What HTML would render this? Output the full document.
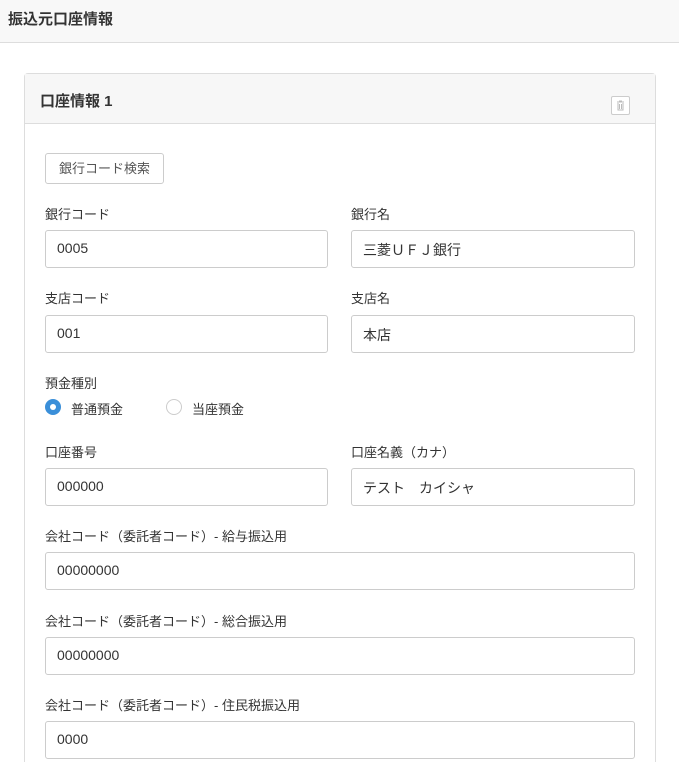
<!DOCTYPE html>
<html style="height:762px;overflow:hidden"><head><meta charset="utf-8"><style>
*{box-sizing:border-box;margin:0;padding:0}
body{width:679px;height:762px;overflow:hidden;background:#fff;font-family:"Liberation Sans","Noto Sans CJK JP",sans-serif;color:#333;position:relative}
.top{position:absolute;left:0;top:0;width:679px;height:43px;background:#f8f8f8;border-bottom:1px solid #ddd}
.top h1{position:absolute;left:8px;top:8px;font-size:15px;font-weight:bold;color:#333}
.card{position:absolute;left:24px;top:73px;width:632px;height:689px;border:1px solid #ddd;border-bottom:none;border-radius:4px 4px 0 0}
.ch{height:50px;background:#f7f7f7;border-bottom:1px solid #ddd;position:relative}
.ch h2{position:absolute;left:15px;top:16px;font-size:15px;font-weight:bold}
.trash{position:absolute;left:586px;top:22px;width:19px;height:19px;border:1px solid #ccc;border-radius:2px;background:#fff}
.a{position:absolute}
.lbl{font-size:13px;color:#333}
.in{height:38px;border:1px solid #ccc;border-radius:3px;font-size:14px;padding:9px 11px;color:#333}
.btn{left:45px;top:153px;width:119px;height:31px;border:1px solid #ccc;border-radius:3px;font-size:13px;color:#555;text-align:center;line-height:29px}
</style></head><body>
<div class="top"><h1>振込元口座情報</h1></div>
<div class="card"><div class="ch"><h2>口座情報 1</h2>
<div class="trash"><svg width="17" height="17" viewBox="0 0 17 17"><path d="M5 5h7M7 4h3M6 6v7h5V6M7.5 7v5M9.5 7v5" stroke="#bbb" fill="none" stroke-width="1"/></svg></div></div></div>
<div class="a btn">銀行コード検索</div>
<div class="a lbl" style="left:45px;top:204px">銀行コード</div>
<div class="a lbl" style="left:351px;top:204px">銀行名</div>
<div class="a in" style="left:45px;top:230px;width:283px">0005</div>
<div class="a in" style="left:351px;top:230px;width:284px">三菱ＵＦＪ銀行</div>
<div class="a lbl" style="left:45px;top:288px">支店コード</div>
<div class="a lbl" style="left:351px;top:288px">支店名</div>
<div class="a in" style="left:45px;top:315px;width:283px">001</div>
<div class="a in" style="left:351px;top:315px;width:284px">本店</div>
<div class="a lbl" style="left:45px;top:373px">預金種別</div>
<div class="a" style="left:45px;top:399px;width:16px;height:16px;border-radius:50%;background:#3a8fd9"><div style="position:absolute;left:5px;top:5px;width:6px;height:6px;border-radius:50%;background:#fff"></div></div>
<div class="a lbl" style="left:71px;top:399px">普通預金</div>
<div class="a" style="left:166px;top:399px;width:16px;height:16px;border-radius:50%;border:1px solid #ccc"></div>
<div class="a lbl" style="left:192px;top:399px">当座預金</div>
<div class="a lbl" style="left:45px;top:442px">口座番号</div>
<div class="a lbl" style="left:351px;top:442px">口座名義（カナ）</div>
<div class="a in" style="left:45px;top:468px;width:283px">000000</div>
<div class="a in" style="left:351px;top:468px;width:284px">テスト　カイシャ</div>
<div class="a lbl" style="left:45px;top:526px">会社コード（委託者コード）- 給与振込用</div>
<div class="a in" style="left:45px;top:552px;width:590px">00000000</div>
<div class="a lbl" style="left:45px;top:611px">会社コード（委託者コード）- 総合振込用</div>
<div class="a in" style="left:45px;top:637px;width:590px">00000000</div>
<div class="a lbl" style="left:45px;top:695px">会社コード（委託者コード）- 住民税振込用</div>
<div class="a in" style="left:45px;top:721px;width:590px">0000</div>
</body></html>
